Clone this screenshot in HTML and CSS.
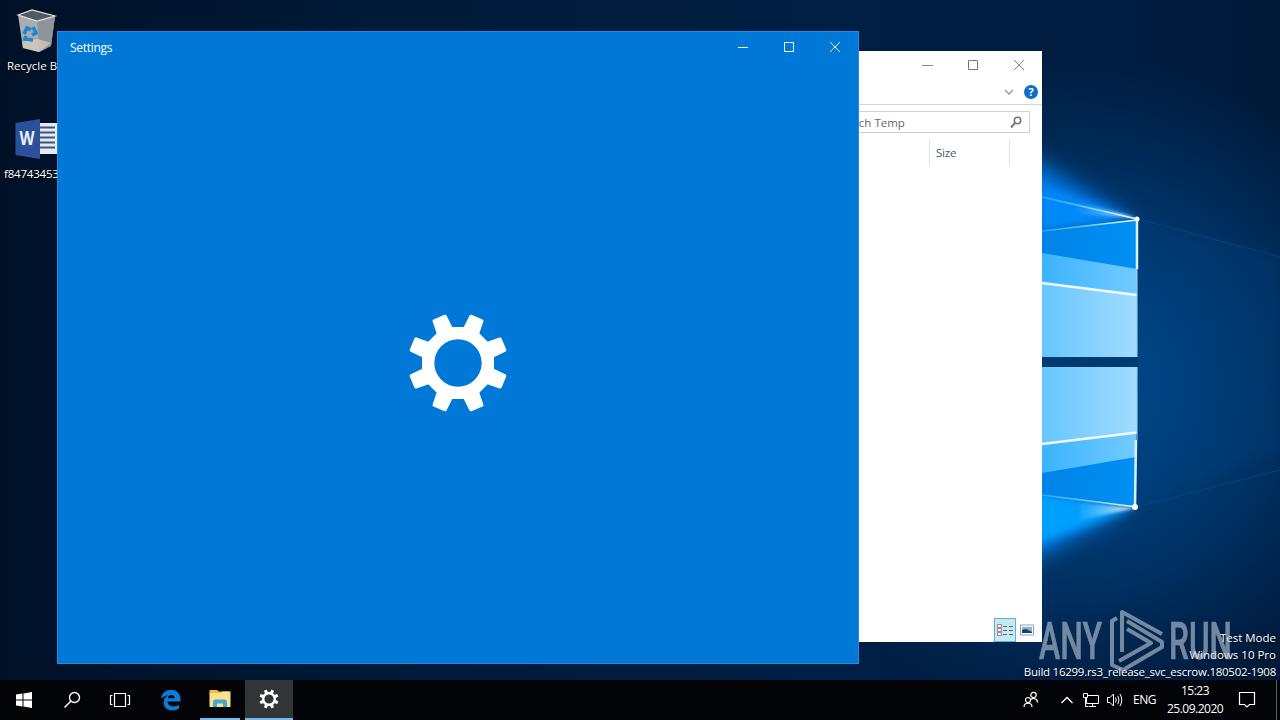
FILE: index.html
```html
<!DOCTYPE html>
<html lang="en">
<head>
    <meta charset="UTF-8">
    <meta name="viewport" content="width=device-width, initial-scale=1.0">
    <title>Desktop</title>
    <link rel="stylesheet" href="styles.css">
</head>
<body>
    <div class="screen">
        <div class="desktop">
            <svg class="wallpaper" viewBox="0 0 1280 680" width="1280" height="680">
                <defs>
                    <linearGradient id="base" x1="0" y1="0" x2="1" y2="0">
                        <stop offset="0" stop-color="#001127"/>
                        <stop offset=".3" stop-color="#001a38"/>
                        <stop offset=".65" stop-color="#001f45"/>
                        <stop offset="1" stop-color="#001a3a"/>
                    </linearGradient>
                    <radialGradient id="halo" gradientUnits="userSpaceOnUse" cx="1080" cy="385" r="330">
                        <stop offset="0" stop-color="#00498c"/>
                        <stop offset=".3" stop-color="#00407c"/>
                        <stop offset=".65" stop-color="#002e5e"/>
                        <stop offset="1" stop-color="#002c5a" stop-opacity="0"/>
                    </radialGradient>
                    <linearGradient id="pane" x1="0" y1="0" x2="1" y2="0">
                        <stop offset="0" stop-color="#66c6ff"/>
                        <stop offset="1" stop-color="#a2dcff"/>
                    </linearGradient>
                    <linearGradient id="band" x1="0" y1="0" x2="1" y2="0">
                        <stop offset="0" stop-color="#3ab4ff"/>
                        <stop offset="1" stop-color="#74caff"/>
                    </linearGradient>
                    <linearGradient id="deep" x1="0" y1="0" x2="1" y2="0">
                        <stop offset="0" stop-color="#0083e8"/>
                        <stop offset="1" stop-color="#0090f4"/>
                    </linearGradient>
                    <linearGradient id="ray" gradientUnits="userSpaceOnUse" x1="1042" y1="0" x2="1137" y2="0">
                        <stop offset="0" stop-color="#3fb0ff" stop-opacity=".7"/>
                        <stop offset=".6" stop-color="#8fd4ff"/>
                        <stop offset="1" stop-color="#ffffff"/>
                    </linearGradient>
                    <linearGradient id="flare" gradientUnits="userSpaceOnUse" x1="1075" y1="0" x2="1137" y2="0">
                        <stop offset="0" stop-color="#9bd8ff" stop-opacity="0"/>
                        <stop offset="1" stop-color="#ffffff"/>
                    </linearGradient>
                    <filter id="soft" x="-50%" y="-50%" width="200%" height="200%"><feGaussianBlur stdDeviation="11"/></filter>
                    <filter id="mid" x="-50%" y="-50%" width="200%" height="200%"><feGaussianBlur stdDeviation="5"/></filter>
                    <filter id="near" x="-50%" y="-50%" width="200%" height="200%"><feGaussianBlur stdDeviation="1.8"/></filter>
                    <filter id="fine" x="-50%" y="-50%" width="200%" height="200%"><feGaussianBlur stdDeviation=".7"/></filter>
                </defs>
                <rect width="1280" height="680" fill="url(#base)"/>
                <rect x="740" y="50" width="540" height="630" fill="url(#halo)"/>
                <path d="M1137 219L1280 256V450L1137 506Z" fill="#004a8c" opacity=".18" filter="url(#mid)"/>
                <!-- light beams leaving the logo corners -->
                <path d="M1130 219L1030 158L980 170V250Z" fill="#0078e8" filter="url(#soft)"/>
                <path d="M1128 507L1030 560L980 560V470Z" fill="#0080ee" filter="url(#soft)"/>
                <path d="M1137 219L1042 186V231Z" fill="#008af8" filter="url(#mid)"/>
                <path d="M1135 508L1030 492V546Z" fill="#00a0ff" filter="url(#mid)"/>
                <path d="M1138 218L1075 201V214Z" fill="url(#flare)" opacity=".8" filter="url(#near)"/>
                <path d="M1136 508L1080 503V520Z" fill="url(#flare)" filter="url(#near)"/>
                <!-- right half of the logo -->
                <path d="M1042 231L1137 220V357H1042Z" fill="url(#deep)"/>
                <path d="M1042 253L1137 269V357H1042Z" fill="url(#band)"/>
                <path d="M1042 283L1137 295V357H1042Z" fill="url(#pane)"/>
                <path d="M1042 367H1137L1135 507L1042 495Z" fill="url(#deep)"/>
                <path d="M1042 367H1137L1136 457L1042 473Z" fill="url(#band)"/>
                <path d="M1042 367H1137V432L1042 444Z" fill="url(#pane)"/>
                <rect x="1042" y="357.5" width="96" height="9.5" fill="#003a70"/>
                <g fill="none" filter="url(#fine)">
                    <path d="M1042 283L1137 295M1042 444L1137 432.500" stroke="#f2fbff" stroke-width="2.600"/>
                    <path d="M1042 197L1137 219M1042 231L1137 220M1042 495L1137 507" stroke="url(#ray)" stroke-width="1.600"/>
                    <path d="M1137 219V269M1136 440L1135 507" stroke="#d6f1ff" stroke-width="2.500"/>
                    <path d="M1137 269V357M1137 367V440" stroke="#8fd6ff" stroke-width="1"/>
                    <path d="M1138 219L1280 257M1136 507L1280 470" stroke="#0a67b0" stroke-width="1" opacity=".35"/>
                </g>
                <circle cx="1137" cy="219" r="2.500" fill="#fff" filter="url(#fine)"/>
                <circle cx="1135" cy="507" r="3" fill="#fff" filter="url(#fine)"/>
            </svg>

            <div class="icons">
                <div class="shortcut">
                    <svg width="50" height="46" viewBox="0 0 50 46">
                        <path d="M6 7L25 12L43 8L39 38L27 44L11 40Z" fill="#a9adb1"/>
                        <path d="M25 12L43 8L39 38L27 44Z" fill="#8f9499"/>
                        <path d="M6 7L20 2L43 8L25 13Z" fill="#515961" stroke="#dfe3e6" stroke-width="1.200"/>
                        <path d="M10 34L26 31L39 35L27 44L11 40Z" fill="#d9cdbd" opacity=".75"/>
                        <path d="M12 26L15 20L19 22M21 19L24 25L20 27M21 32L13 31L14 28" fill="none" stroke="#1d86d2" stroke-width="3.600"/>
                    </svg>
                    <span>Recycle Bin</span>
                </div>
                <div class="shortcut word">
                    <svg width="50" height="46" viewBox="0 0 50 46">
                        <path d="M24 9H48V40H24Z" fill="#e6e9ef"/>
                        <path d="M25 13.500H41M25 18.500H41M25 23.500H41M25 28.500H41M25 33.500H41" stroke="#3c5484" stroke-width="2"/>
                        <path d="M1.500 9L26 5V45L1.500 41Z" fill="#2a5199"/>
                        <text class="word-letter" x="13" y="30.500" textLength="15" lengthAdjust="spacingAndGlyphs" text-anchor="middle">W</text>
                    </svg>
                    <span>f84743453</span>
                </div>
            </div>

            <div class="build">
                <span>Test Mode</span>
                <span>Windows 10 Pro</span>
                <span class="build-number">Build 16299.rs3_release_svc_escrow.180502-1908</span>
            </div>

            <div class="window explorer">
                <div class="caption">
                    <svg width="46" height="28"><path d="M18 14.500H29" stroke="#888"/></svg>
                    <svg width="46" height="28"><path d="M18.500 9.500H27.500V18.500H18.500Z" fill="none" stroke="#777"/></svg>
                    <svg width="46" height="28"><path d="M18 9L28 19M28 9L18 19" stroke="#888"/></svg>
                </div>
                <div class="ribbon">
                    <svg width="10" height="8"><path d="M1 2L5 6L9 2" fill="none" stroke="#999" stroke-width="1.300"/></svg>
                    <span class="help">?</span>
                </div>
                <div class="search">
                    <span>Search Temp</span>
                    <svg width="14" height="14"><circle cx="8.500" cy="5.500" r="3.200" fill="none" stroke="#777" stroke-width="1.600"/><path d="M6 8L2 12.500" stroke="#777" stroke-width="2"/></svg>
                </div>
                <div class="columns">
                    <span class="column">Size</span>
                </div>
                <div class="views">
                    <div class="view active">
                        <svg width="16" height="14"><path d="M.5 1.500H4.500V4.500H.5ZM.5 5.500H4.500V8.500H.5ZM.5 9.500H4.500V12.500H.5Z" fill="#fff" stroke="#b07888"/><path d="M6 3.500H10M12 3.500H16M6 7.500H10M12 7.500H16M6 11.500H10M12 11.500H16" stroke="#4d6a7a"/></svg>
                    </div>
                    <div class="view">
                        <svg width="14" height="12"><path d="M.5 1H13.500V11H.5Z" fill="#fff" stroke="#8aa0b4"/><path d="M2 3H12V9H2Z" fill="#7fb2df"/><path d="M2 6L6 5L12 8V9H2Z" fill="#1f3c5e"/></svg>
                    </div>
                </div>
            </div>

            <div class="window settings">
                <div class="caption">
                    <span class="title">Settings</span>
                    <svg width="46" height="30"><path d="M18 15.500H28" stroke="#fff"/></svg>
                    <svg width="46" height="30"><path d="M18.500 10.500H27.500V19.500H18.500Z" fill="none" stroke="#fff"/></svg>
                    <svg width="46" height="30"><path d="M18 10L28 20M28 10L18 20" stroke="#fff"/></svg>
                </div>
                <div class="splash">
                    <svg width="100" height="100" viewBox="-50 -50 100 100">
                        <defs>
                            <path id="tooth" d="M-8.500 -34L-7.600 -48Q-7.500 -49.700 -6 -49.700H6Q7.500 -49.700 7.600 -48L8.500 -34Z"/>
                            <g id="gear">
                                <path fill-rule="evenodd" d="M-15 -36H15L36 -15V15L15 36H-15L-36 15V-15ZM0 -23.700A23.700 23.700 0 1 0 0 23.700A23.700 23.700 0 1 0 0 -23.700Z"/>
                                <use href="#tooth" transform="rotate(22.500)"/>
                                <use href="#tooth" transform="rotate(67.500)"/>
                                <use href="#tooth" transform="rotate(112.500)"/>
                                <use href="#tooth" transform="rotate(157.500)"/>
                                <use href="#tooth" transform="rotate(202.500)"/>
                                <use href="#tooth" transform="rotate(247.500)"/>
                                <use href="#tooth" transform="rotate(292.500)"/>
                                <use href="#tooth" transform="rotate(337.500)"/>
                            </g>
                        </defs>
                        <use href="#gear" fill="#fff"/>
                    </svg>
                </div>
            </div>

            <svg class="watermark" width="200" height="80" viewBox="0 0 200 80">
                <text x="3" y="59" textLength="63" lengthAdjust="spacingAndGlyphs">ANY</text>
                <text x="133" y="59" textLength="63" lengthAdjust="spacingAndGlyphs">RUN</text>
                <g fill="none" stroke="#c3cad6" stroke-width="4" stroke-linejoin="round">
                    <path d="M81 18L76 21V65L87 70L126 47V42L91 21"/>
                    <path d="M86 52V12L126 34"/>
                    <path d="M83 61L115 43L91 29"/>
                </g>
            </svg>
        </div>

        <div class="taskbar">
            <div class="task">
                <svg width="18" height="18"><path d="M1 3.500L7.500 2.500V8.500H1ZM8.500 2.400L17 1V8.500H8.500ZM1 9.500H7.500V15.500L1 14.500ZM8.500 9.500H17V17L8.500 15.600Z" fill="#fff"/></svg>
            </div>
            <div class="task">
                <svg width="18" height="18"><circle cx="11.500" cy="6.500" r="5" fill="none" stroke="#fff" stroke-width="1.400"/><path d="M8 10L1.500 16.500" stroke="#fff" stroke-width="1.500"/></svg>
            </div>
            <div class="task">
                <svg width="22" height="16"><path d="M5.500 1.500H16.500V14.500H5.500ZM3.500 3.500H1.500V12.500H3.500M18.500 3.500H20.500V12.500H18.500" fill="none" stroke="#fff" stroke-width="1.200"/></svg>
            </div>
            <div class="task edge">
                <svg width="22" height="22"><path d="M1 10C1.500 4.500 5.500 .8 11 .8C17.500 .8 21 5.500 20.600 12.500H7.500C8 18 14.500 18.500 19 16V19.800C12 23.500 3.600 21 3.600 13.500C3.600 10 5.500 7.500 8.300 6.500C5 6.500 2.500 7.800 1 10ZM7.700 9.300H14.600C14.700 5 8.300 5 7.700 9.300Z" fill="#0a7ddb" fill-rule="evenodd"/></svg>
            </div>
            <div class="task open">
                <svg width="22" height="20"><path d="M.5 1H8L10 2.500H20V5H.5Z" fill="#eebb3c"/><path d="M.5 4H12L13.500 2.500H21.500V18H.5Z" fill="#fde08b"/><path d="M4 18V13Q4 10.500 6 10.500H16Q18 10.500 18 13V18H14V14.500H8V18Z" fill="#3ba9dd"/></svg>
            </div>
            <div class="task open current">
                <svg width="20" height="20" viewBox="-52 -52 104 104"><use href="#gear" fill="#fff"/></svg>
            </div>

            <div class="tray">
                <svg class="people" width="16" height="18"><g fill="none" stroke="#fff" stroke-width="1.200"><circle cx="10.500" cy="4" r="2.700"/><circle cx="5" cy="9" r="2.500"/><path d="M1 16C1 11 9 11 9 16M8 8.500C10.500 6.500 14.500 7.500 14.500 11.500"/></g></svg>
                <svg class="arrow" width="14" height="10"><path d="M1.500 8L7 2.500L12.500 8" fill="none" stroke="#fff" stroke-width="1.300"/></svg>
                <svg class="network" width="18" height="16"><path d="M5.500 3.500H16.500V11.500H4.500V6M10.500 11.500V14.500M6.500 14.500H14M1.500 1.500H5.500V5.500H1.500ZM3.500 5.500V14.500H6" fill="none" stroke="#fff"/></svg>
                <svg class="sound" width="18" height="16"><path d="M1.500 5.500H4L7.500 2V14L4 10.500H1.500ZM9.500 5.500Q11 8 9.500 10.500M11.800 3.800Q14.200 8 11.800 12.200M14 2Q17.500 8 14 14" fill="none" stroke="#fff"/></svg>
                <span class="lang">ENG</span>
                <div class="clock">
                    <span>15:23</span>
                    <span class="date">25.09.2020</span>
                </div>
                <svg class="action" width="18" height="18"><path d="M1.500 1.500H16.500V13.500H11.500L9 16L6.500 13.500H1.500Z" fill="none" stroke="#fff" stroke-width="1.200"/></svg>
            </div>
        </div>
    </div>
</body>
</html>
```

FILE: styles.css
```css
body {
    margin: 0;
    font-family: "Open Sans", "Noto Sans", sans-serif;
    font-size: 12px;
    line-height: 16px;
    color: #fff;
    overflow: hidden;
}
svg {
    display: block;
    flex: none;
}
.screen {
    display: flex;
    flex-direction: column;
    width: 1280px;
    height: 720px;
}
.desktop {
    position: relative;
    height: 680px;
    overflow: hidden;
}
.wallpaper {
    position: absolute;
    left: 0;
    top: 0;
}
.icons {
    position: relative;
    display: flex;
    flex-direction: column;
    gap: 40px;
    width: 74px;
    padding-top: 8px;
}
.shortcut {
    display: flex;
    flex-direction: column;
    gap: 4px;
    height: 68px;
    padding-left: 12px;
}
.shortcut span {
    margin-left: -5px;
    font-size: 11.5px;
    letter-spacing: 0;
    white-space: nowrap;
    text-shadow: 0 1px 2px #000;
}
.word {
    padding-left: 14px;
}
.shortcut.word span {
    margin-left: -10px;
    letter-spacing: -0.2px;
}
.word svg {
    margin-top: -2px;
    margin-bottom: 2px;
}
.word-letter {
    font-size: 19px;
    font-weight: bold;
    fill: #e8edf6;
}
.window {
    position: absolute;
    box-sizing: border-box;
    display: flex;
    flex-direction: column;
}
.caption {
    display: flex;
    justify-content: flex-end;
}
.settings {
    left: 57px;
    top: 31px;
    width: 802px;
    height: 633px;
    background: #0078d7;
    border: 1px solid #2a8ade;
}
.title {
    flex: 1;
    padding-left: 12px;
    line-height: 31px;
    height: 30px;
    font-size: 12px;
    letter-spacing: -0.3px;
}
.splash {
    display: flex;
    flex: 1;
    align-items: center;
    justify-content: center;
}
.explorer {
    left: 640px;
    top: 51px;
    width: 402px;
    height: 591px;
    background: #fff;
    color: #666;
}
.ribbon {
    display: flex;
    align-items: center;
    justify-content: flex-end;
    gap: 10px;
    height: 25px;
    padding-right: 4px;
    border-bottom: 1px solid #d5d5d5;
}
.help {
    width: 14px;
    height: 14px;
    border-radius: 50%;
    background: #0a6fc8;
    color: #fff;
    font-size: 11px;
    font-weight: bold;
    line-height: 14px;
    text-align: center;
}
.search {
    display: flex;
    align-items: center;
    justify-content: space-between;
    height: 20px;
    margin: 6px 12px 6px 180px;
    padding: 0 6px 0 14px;
    border: 1px solid #d0d0d0;
    font-size: 11.5px;
    line-height: 21px;
}
.columns {
    display: flex;
    justify-content: flex-end;
    height: 27px;
    padding-right: 32px;
}
.column {
    width: 73px;
    padding-left: 6px;
    border-left: 1px solid #e2e2e2;
    border-right: 1px solid #e2e2e2;
    font-size: 11.5px;
    letter-spacing: -0.2px;
    line-height: 27px;
    color: #43597a;
}
.views {
    display: flex;
    justify-content: flex-end;
    margin-top: auto;
    padding-right: 4px;
}
.view {
    display: flex;
    align-items: center;
    justify-content: center;
    width: 22px;
    height: 24px;
}
.active {
    box-sizing: border-box;
    background: #c8e9f3;
    border: 1px solid #5cb6cb;
}
.build {
    position: absolute;
    right: 4px;
    bottom: 0;
    display: flex;
    flex-direction: column;
    align-items: flex-end;
    font-size: 11.5px;
    line-height: 17px;
    text-shadow: 0 1px 2px #000;
}
.build-number {
    letter-spacing: -0.26px;
}
.watermark {
    position: absolute;
    left: 1036px;
    top: 600px;
    opacity: 0.6;
}
.watermark text {
    font-family: Roboto, sans-serif;
    font-size: 52px;
    font-weight: 500;
    fill: #c3cad6;
    stroke: #c3cad6;
    stroke-width: 0.6px;
}
.taskbar {
    display: flex;
    height: 40px;
    background: #020408;
}
.task {
    box-sizing: border-box;
    display: flex;
    align-items: center;
    justify-content: center;
    width: 48px;
    height: 40px;
}
.edge {
    width: 54px;
}
.open {
    width: 40px;
    margin: 0 2px;
    border-bottom: 2px solid #76b9ed;
}
.current {
    width: 48px;
    margin: 0 3px;
    background: #343539;
}
.tray {
    display: flex;
    align-items: center;
    margin-left: auto;
    margin-right: 3px;
    padding-right: 20px;
    border-right: 1px solid #5a5d62;
}
.people {
    margin-right: 21px;
}
.arrow {
    margin-right: 8px;
}
.network {
    margin-right: 6px;
}
.sound {
    margin-right: 9px;
}
.lang {
    width: 24px;
    letter-spacing: -0.5px;
}
.clock {
    display: flex;
    flex-direction: column;
    align-items: center;
    width: 54px;
    margin: 0 16px 0 11px;
    line-height: 18px;
    letter-spacing: -0.5px;
}
```
